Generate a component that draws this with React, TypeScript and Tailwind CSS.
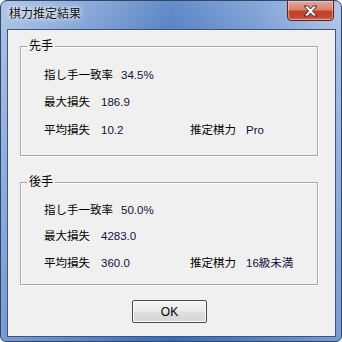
import React from "react";

function Row({ label, value, valueMl, right }: { label: string; value: string; valueMl: string; right?: { label: string; value: string } }) {
  return (
    <div className="flex items-center h-[20px] pl-[23px]">
      <div className="flex items-center w-[146px]">
        <span>{label}</span>
        <span className={valueMl + " text-[#10103a]"}>{value}</span>
      </div>
      {right && (
        <div className="flex items-center">
          <span>{right.label}</span>
          <span className="ml-[10px] text-[#10103a]">{right.value}</span>
        </div>
      )}
    </div>
  );
}

function Group({ title, h, children }: { title: string; h: string; children: React.ReactNode }) {
  return (
    <div className={"relative ml-[12px] mr-[17px] border border-[#a5a5a5] shadow-[inset_1px_1px_0_#fff,1px_1px_0_#fff] " + h}>
      <span className="absolute left-[6px] top-[-10px] px-[2px] bg-[#f0f0f0] leading-[18px] text-[12px]">{title}</span>
      {children}
    </div>
  );
}

export default function App() {
  return (
    <div
      className="w-[342px] h-[342px] rounded-t-[7px] rounded-b-[6px] overflow-hidden flex flex-col text-[11.5px] text-black border border-[#30466b] bg-[linear-gradient(180deg,rgba(255,255,255,0.18)_0%,rgba(255,255,255,0)_20%,rgba(30,80,170,0.3)_100%),linear-gradient(90deg,#9fbbe2_0%,#7ea2d6_20%,#4674bd_50%,#6c94cf_75%,#a3bde2_100%)]"
      style={{ fontFamily: '"Liberation Sans", "Noto Sans CJK JP", sans-serif' }}
    >
      <div className="h-[28px] flex items-start justify-between">
        <span className="pl-[8px] pt-[4px] text-[12px] leading-[18px] text-[#111] [text-shadow:0_0_6px_rgba(255,255,255,0.9),0_0_3px_rgba(255,255,255,0.9)]">棋力推定結果</span>
        <div className="mr-[7px] mt-[-1px] w-[47px] h-[21px] rounded-b-[4px] border border-[#5e2118] bg-[linear-gradient(180deg,#e3a89c_0%,#d8826f_45%,#c2412b_55%,#c24a34_85%,#d86d52_100%)] shadow-[inset_0_0_0_1px_rgba(255,220,210,0.5)] flex items-center justify-center">
          <svg width="17" height="12" viewBox="0 0 17 12">
            <path d="M2 1 L6 1 L8.5 4 L11 1 L15 1 L10.5 6 L15 11 L11 11 L8.5 8 L6 11 L2 11 L6.5 6 Z" fill="#fff" stroke="#4a2a28" strokeWidth="1" strokeLinejoin="round" />
          </svg>
        </div>
      </div>
      <div className="ml-[6px] w-[329px] h-[308px] bg-[#f0f0f0] border border-[#3f5478] flex flex-col">
        <div className="mt-[16px]">
          <Group title="先手" h="h-[110px]">
            <div className="mt-[19px]">
              <Row label="指し手一致率" value="34.5%" valueMl="ml-[8px]" />
            </div>
            <div className="mt-[7px]">
              <Row label="最大損失" value="186.9" valueMl="ml-[11px]" />
            </div>
            <div className="mt-[8px]">
              <Row label="平均損失" value="10.2" valueMl="ml-[11px]" right={{ label: "推定棋力", value: "Pro" }} />
            </div>
          </Group>
        </div>
        <div className="mt-[26px]">
          <Group title="後手" h="h-[103px]">
            <div className="mt-[18px]">
              <Row label="指し手一致率" value="50.0%" valueMl="ml-[8px]" />
            </div>
            <div className="mt-[6px]">
              <Row label="最大損失" value="4283.0" valueMl="ml-[11px]" />
            </div>
            <div className="mt-[7px]">
              <Row label="平均損失" value="360.0" valueMl="ml-[11px]" right={{ label: "推定棋力", value: "16級未満" }} />
            </div>
          </Group>
        </div>
        <div className="mt-[15px] flex justify-center">
          <button className="w-[75px] h-[23px] border border-[#4a4a4a] rounded-[2px] bg-[linear-gradient(180deg,#f4f4f4_0%,#ececec_45%,#dedede_55%,#d6d6d6_100%)] shadow-[inset_0_0_0_1px_#fdfdfd] text-[12px] leading-none ml-[-4px]">
            OK
          </button>
        </div>
      </div>
    </div>
  );
}
